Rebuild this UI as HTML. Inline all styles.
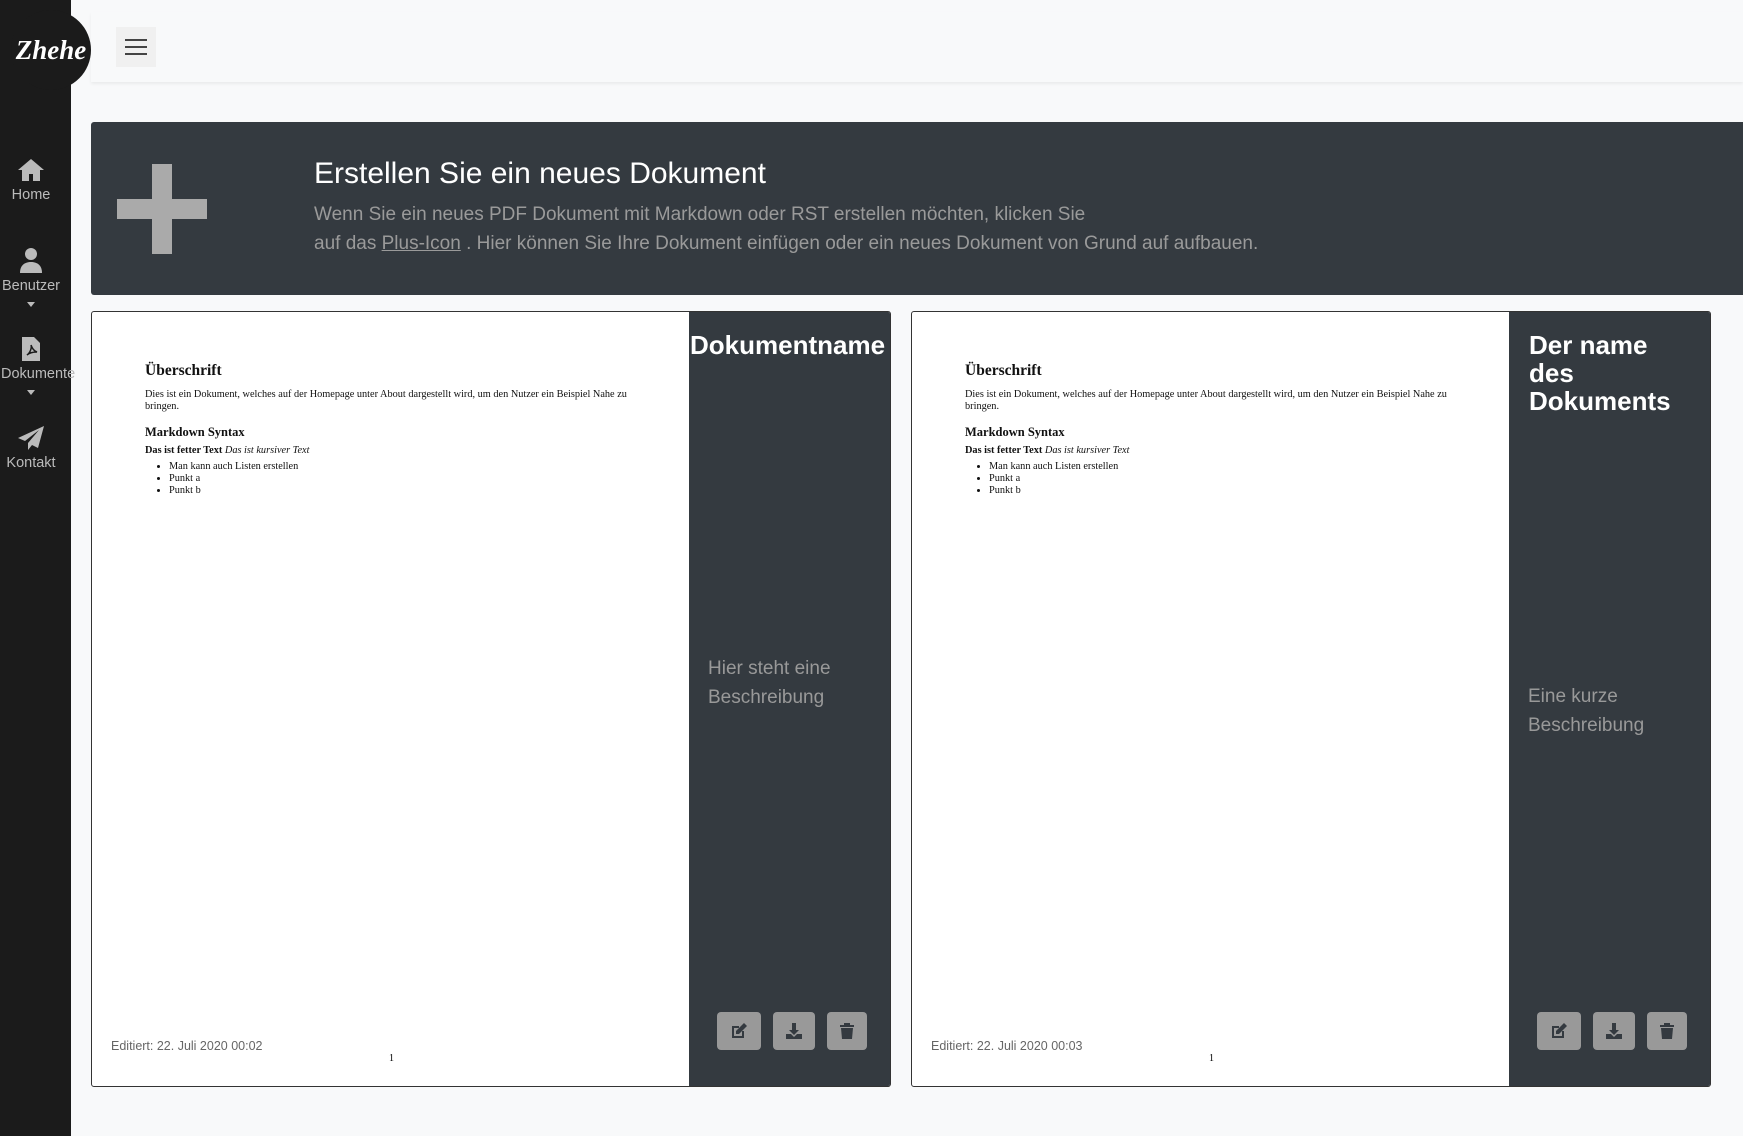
<!DOCTYPE html>
<html><head><meta charset="utf-8"><style>
*{box-sizing:border-box;margin:0;padding:0}
body{width:1743px;height:1136px;background:#f8f9fa;font-family:"Liberation Sans",sans-serif;position:relative;overflow:hidden}
.side{position:absolute;left:0;top:0;width:71px;height:1136px;background:#1b1b1b}
.logo{position:absolute;left:11px;top:10px;width:80px;height:80px;border-radius:50%;background:#1b1b1b;color:#fff;font:italic bold 27px "Liberation Serif",serif;display:flex;align-items:center;justify-content:center;z-index:2}
.nav{position:absolute;left:0;width:62px;text-align:center;color:#bbb;font-size:14.5px}
.nav svg{display:block;margin:0 auto 4px}
.caret{width:0;height:0;border-left:4px solid transparent;border-right:4px solid transparent;border-top:5px solid #bbb;margin:8px auto 0}
.topbar{position:absolute;left:91px;top:12px;right:0;height:70px;background:#f8f9fa;box-shadow:0 2px 3px rgba(0,0,0,.06)}
.ham{position:absolute;left:25px;top:15px;width:40px;height:40px;background:#f0f0f0}
.ham i{position:absolute;left:9px;width:22px;height:2px;background:#444}
.banner{position:absolute;left:91px;top:122px;right:0;height:173px;background:#343a40;border-radius:3px 0 0 3px}
.banner h1{position:absolute;left:223px;top:35px;color:#fff;font-size:30px;font-weight:normal}
.banner p{position:absolute;left:223px;top:78px;color:#9a9a9a;font-size:19px;line-height:29px}
.card{position:absolute;top:311px;width:800px;height:776px;background:#fff;border:1.5px solid #333;border-radius:3px;overflow:hidden}
.dark{position:absolute;right:0;top:0;width:201px;height:100%;background:#343a40}
.dark h2{color:#fff;font-size:26px;font-weight:bold;line-height:28px;position:absolute;left:1px;top:19px}
.desc{position:absolute;left:19px;color:#999;font-size:19px;line-height:29px}
.btn{position:absolute;top:700px;height:38px;background:#999;border-radius:4px;display:flex;align-items:center;justify-content:center}
.pdf{position:absolute;left:53px;top:50px;font-family:"Liberation Serif",serif;color:#111}
.pdf h3{font-size:15.5px;font-weight:bold;margin-bottom:9px}
.pdf p{font-size:10.3px;line-height:12px;width:505px}
.pdf h4{font-size:12.5px;margin:12px 0 5px}
.pdf ul{font-size:10.3px;line-height:11.8px;margin:4px 0 0 24px}
.ed{position:absolute;left:19px;top:727px;font-size:12.5px;color:#666}
.pn{position:absolute;left:297px;top:741px;font-size:10px;font-family:"Liberation Serif",serif}
</style></head><body>
<div class="side"></div>
<div class="logo">Zhehe</div>
<div class="nav" style="top:157px"><svg width="30" height="26" viewBox="0 0 30 26"><path d="M15 2L2 13h4v11h7v-7h4v7h7V13h4L15 2z" fill="#bbb"/></svg>Home</div>
<div class="nav" style="top:246px"><svg width="24" height="28" viewBox="0 0 24 28"><circle cx="12" cy="8" r="6" fill="#bbb"/><path d="M1 27c0-8 5-11 11-11s11 3 11 11z" fill="#bbb"/></svg>Benutzer<div class="caret"></div></div>
<div class="nav" style="top:336px;left:1px;width:80px;text-align:left"><svg width="20" height="26" viewBox="0 0 20 26" style="margin:0 0 4px 20px"><path d="M1 1h12l6 6v18H1z" fill="#bbb"/><path d="M6 19c3-2 5-7 4-10 1 3 3 6 6 7-4 0-8 1-10 3z" stroke="#1b1b1b" stroke-width="1.5" fill="none"/></svg>Dokumente<div class="caret" style="margin-left:26px"></div></div>
<div class="nav" style="top:425px"><svg width="28" height="26" viewBox="0 0 28 26"><path d="M27 1L1 13l7 3 14-11-11 13v7l4-5 6 3z" fill="#bbb"/></svg>Kontakt</div>
<div class="topbar"><div class="ham"><i style="top:12px"></i><i style="top:19px"></i><i style="top:26px"></i></div></div>
<div class="banner">
<div style="position:absolute;left:26px;top:42px;width:90px;height:90px"><div style="position:absolute;left:35px;top:0;width:20px;height:90px;background:#aaa"></div><div style="position:absolute;left:0;top:35px;width:90px;height:20px;background:#aaa"></div></div>
<h1>Erstellen Sie ein neues Dokument</h1>
<p>Wenn Sie ein neues PDF Dokument mit Markdown oder RST erstellen möchten, klicken Sie<br>auf das <u>Plus-Icon</u> . Hier können Sie Ihre Dokument einfügen oder ein neues Dokument von Grund auf aufbauen.</p>
</div>

<div class="card" style="left:91px">
<div class="pdf"><h3>Überschrift</h3><p>Dies ist ein Dokument, welches auf der Homepage unter About dargestellt wird, um den Nutzer ein Beispiel Nahe zu bringen.</p><h4>Markdown Syntax</h4><p><b>Das ist fetter Text</b> <i>Das ist kursiver Text</i></p><ul><li>Man kann auch Listen erstellen</li><li>Punkt a</li><li>Punkt b</li></ul></div>
<div class="ed">Editiert: 22. Juli 2020 00:02</div><div class="pn">1</div>
<div class="dark"><h2>Dokumentname</h2><div class="desc" style="top:342px">Hier steht eine<br>Beschreibung</div>
<div class="btn" style="left:28px;width:44px"><svg width="18" height="18" viewBox="0 0 18 18"><path d="M2 4h7v2H4v8h8V9h2v7H2z" fill="#343a40"/><path d="M14 1l3 3-8 8H6V9z" fill="#343a40"/></svg></div>
<div class="btn" style="left:84px;width:42px"><svg width="18" height="18" viewBox="0 0 18 18"><path d="M7 1h4v7h3l-5 5-5-5h3z" fill="#343a40"/><path d="M1 12h5l3 3 3-3h5v5H1z" fill="#343a40"/></svg></div>
<div class="btn" style="left:138px;width:40px"><svg width="16" height="18" viewBox="0 0 16 18"><path d="M1 3h14v2H1zM5 1h6v2H5zM2 6h12l-1 11H3z" fill="#343a40"/></svg></div>
</div></div>

<div class="card" style="left:911px">
<div class="pdf"><h3>Überschrift</h3><p>Dies ist ein Dokument, welches auf der Homepage unter About dargestellt wird, um den Nutzer ein Beispiel Nahe zu bringen.</p><h4>Markdown Syntax</h4><p><b>Das ist fetter Text</b> <i>Das ist kursiver Text</i></p><ul><li>Man kann auch Listen erstellen</li><li>Punkt a</li><li>Punkt b</li></ul></div>
<div class="ed">Editiert: 22. Juli 2020 00:03</div><div class="pn">1</div>
<div class="dark"><h2 style="left:20px">Der name<br>des<br>Dokuments</h2><div class="desc" style="top:370px">Eine kurze<br>Beschreibung</div>
<div class="btn" style="left:28px;width:44px"><svg width="18" height="18" viewBox="0 0 18 18"><path d="M2 4h7v2H4v8h8V9h2v7H2z" fill="#343a40"/><path d="M14 1l3 3-8 8H6V9z" fill="#343a40"/></svg></div>
<div class="btn" style="left:84px;width:42px"><svg width="18" height="18" viewBox="0 0 18 18"><path d="M7 1h4v7h3l-5 5-5-5h3z" fill="#343a40"/><path d="M1 12h5l3 3 3-3h5v5H1z" fill="#343a40"/></svg></div>
<div class="btn" style="left:138px;width:40px"><svg width="16" height="18" viewBox="0 0 16 18"><path d="M1 3h14v2H1zM5 1h6v2H5zM2 6h12l-1 11H3z" fill="#343a40"/></svg></div>
</div></div>
</body></html>
